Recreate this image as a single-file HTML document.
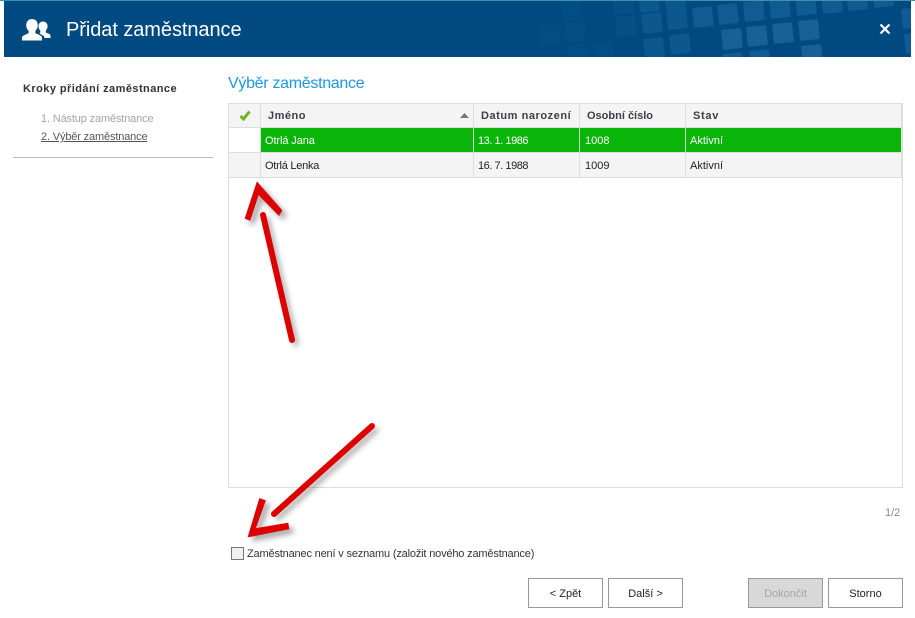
<!DOCTYPE html>
<html><head><meta charset="utf-8">
<style>
html,body{margin:0;padding:0;background:#fff}
#p{position:relative;width:915px;height:618px;overflow:hidden;background:#fff;font-family:"Liberation Sans",sans-serif;font-size:11px;color:#222}
#p span{position:absolute;white-space:nowrap;line-height:14px}
.b{position:absolute;box-sizing:border-box;top:578px;width:75px;height:30px;border:1px solid #999;background:#fff;text-align:center;line-height:30px;color:#222;font-size:11px}
.l{position:absolute}
.h{font-weight:bold;color:#3a3f48;font-size:11px}
</style></head><body><div id="p">
<div class="l" style="left:0;top:0;width:915px;height:1px;background:#3a93a8"></div>
<div class="l" style="left:4px;top:1px;width:907px;height:56px;background:#004a82;overflow:hidden">
<svg width="907" height="56" style="position:absolute;left:0;top:0" viewBox="4 1 907 56">
<defs><rect id="t" x="-10" y="-10" width="20" height="20" rx="2"/></defs>
<g fill="#2a75a8">
<g opacity=".08">
<use href="#t" transform="translate(572 10) rotate(-6)"/><use href="#t" transform="translate(575 32) rotate(-6)"/><use href="#t" transform="translate(550 35) rotate(-6)"/><use href="#t" transform="translate(577 55) rotate(-6)"/><use href="#t" transform="translate(603 53) rotate(-6)"/>
</g>
<g opacity=".14">
<use href="#t" transform="translate(623 4) rotate(-6)"/><use href="#t" transform="translate(626 26) rotate(-6)"/>
</g>
<g opacity=".3">
<use href="#t" transform="translate(649 2) rotate(-6)"/><use href="#t" transform="translate(675 0) rotate(-6)"/><use href="#t" transform="translate(652 23) rotate(-6)"/><use href="#t" transform="translate(677 19) rotate(-6)"/><use href="#t" transform="translate(654 48) rotate(-6)"/><use href="#t" transform="translate(680 44) rotate(-6)"/>
</g>
<g opacity=".4">
<use href="#t" transform="translate(703 17) rotate(-6)"/><use href="#t" transform="translate(728 14) rotate(-6)"/><use href="#t" transform="translate(754 11) rotate(-6)"/><use href="#t" transform="translate(780 8) rotate(-6)"/><use href="#t" transform="translate(806 5) rotate(-6)"/><use href="#t" transform="translate(832 3) rotate(-6)"/><use href="#t" transform="translate(857 0) rotate(-6)"/><use href="#t" transform="translate(883 -3) rotate(-6)"/><use href="#t" transform="translate(912 18) rotate(-6)"/><use href="#t" transform="translate(915 43) rotate(-6)"/>
<use href="#t" transform="translate(733 63) rotate(-6)"/><use href="#t" transform="translate(760 60) rotate(-6)"/>
</g>
<g opacity=".55">
<use href="#t" transform="translate(732 39) rotate(-6)"/><use href="#t" transform="translate(757 36) rotate(-6)"/><use href="#t" transform="translate(783 33) rotate(-6)"/><use href="#t" transform="translate(809 30) rotate(-6)"/><use href="#t" transform="translate(812 55) rotate(-6)"/>
</g>
</g>
</svg>
</div>
<svg class="l" style="left:0;top:0" width="60" height="50" viewBox="0 0 60 50"><path fill="#fff" d="M43 21.500c-2.700 0-4.500 2.100-4.500 4.800 0 1.800.7 3.300 1.800 4.300v2l-1 .6 5 3.300V38H50.500v-2.500c0-1.500-3.500-2.500-4.700-3v-2c1.100-1 1.800-2.500 1.800-4.200 0-2.700-1.900-4.800-4.600-4.800z"/><path fill="#fff" d="M32 19c-3.500 0-5.800 2.700-5.800 6.200 0 2.300 1 4.300 2.400 5.600v2.400c-2.500 1.100-6.600 2.300-6.600 4.300v3h20v-3c0-2-4.100-3.200-6.600-4.300v-2.400c1.400-1.300 2.400-3.300 2.400-5.600C37.800 21.700 35.500 19 32 19z"/></svg>
<span style="left:66px;top:19px;font-size:20px;line-height:22px;color:#fff;letter-spacing:-.07px">Přidat zaměstnance</span>
<svg class="l" style="left:879px;top:23px" width="12" height="12" viewBox="0 0 12 12"><path d="M1.500 1.500l9 9M10.500 1.500l-9 9" stroke="#fff" stroke-width="2.200"/></svg>

<span style="left:23px;top:82px;font-weight:bold;color:#333;letter-spacing:.44px">Kroky přidání zaměstnance</span>
<span style="left:41px;top:112px;color:#a4a4a8;letter-spacing:-.15px">1. Nástup zaměstnance</span>
<span style="left:41px;top:130px;color:#555;text-decoration:underline;letter-spacing:-.15px">2. Výběr zaměstnance</span>
<div class="l" style="left:13px;top:157px;width:200px;height:1px;background:#bbb"></div>

<span style="left:228px;top:75px;font-size:16px;line-height:18px;color:#1f96e4;letter-spacing:-.3px">Výběr zaměstnance</span>

<div class="l" style="left:228px;top:103px;width:675px;height:385px;box-sizing:border-box;border:1px solid #ddd;background:#fff"></div>
<div class="l" style="left:229px;top:104px;width:672px;height:73px;background:#f4f4f4"></div>
<div class="l" style="left:229px;top:128px;width:31px;height:24px;background:#fff"></div>
<div class="l" style="left:261px;top:128px;width:640px;height:24px;background:#08b508"></div>
<div class="l" style="left:229px;top:127px;width:673px;height:1px;background:#ddd"></div>
<div class="l" style="left:229px;top:152px;width:673px;height:1px;background:#ddd"></div>
<div class="l" style="left:229px;top:177px;width:673px;height:1px;background:#ddd"></div>
<div class="l" style="left:260px;top:104px;width:1px;height:73px;background:#ddd"></div>
<div class="l" style="left:473px;top:104px;width:1px;height:73px;background:#ddd"></div>
<div class="l" style="left:579px;top:104px;width:1px;height:73px;background:#ddd"></div>
<div class="l" style="left:685px;top:104px;width:1px;height:73px;background:#ddd"></div>
<div class="l" style="left:901px;top:104px;width:1px;height:73px;background:#ddd"></div>
<svg class="l" style="left:239px;top:110px" width="12" height="11" viewBox="0 0 12 11"><path d="M1.500 6l3 3 6-7.500" fill="none" stroke="#6cb61c" stroke-width="3"/></svg>
<span class="h" style="left:268px;top:109px;letter-spacing:.5px">Jméno</span>
<svg class="l" style="left:460px;top:113px" width="9" height="5"><path d="M0 5L4.500 0 9 5z" fill="#777"/></svg>
<span class="h" style="left:481px;top:109px;letter-spacing:.55px">Datum narození</span>
<span class="h" style="left:587px;top:109px">Osobní číslo</span>
<span class="h" style="left:693px;top:109px;letter-spacing:.7px">Stav</span>

<span style="left:265px;top:134px;color:#fff;letter-spacing:-.1px">Otrlá Jana</span>
<span style="left:478px;top:134px;color:#fff;letter-spacing:-.45px">13. 1. 1986</span>
<span style="left:585px;top:134px;color:#fff">1008</span>
<span style="left:690px;top:134px;color:#fff">Aktivní</span>
<span style="left:265px;top:159px;letter-spacing:-.25px">Otrlá Lenka</span>
<span style="left:478px;top:159px;letter-spacing:-.45px">16. 7. 1988</span>
<span style="left:585px;top:159px">1009</span>
<span style="left:690px;top:159px">Aktivní</span>

<span style="left:885px;top:506px;color:#888">1/2</span>
<div class="l" style="left:231px;top:547px;width:13px;height:13px;box-sizing:border-box;border:1px solid #777;background:#f0f0f0"></div>
<span style="left:247px;top:547px;letter-spacing:-.17px;color:#333">Zaměstnanec není v seznamu (založit nového zaměstnance)</span>

<div class="b" style="left:528px">&lt; Zpět</div>
<div class="b" style="left:608px">Další &gt;</div>
<div class="b" style="left:748px;background:#d8d8d8;color:#a6a6a6">Dokončit</div>
<div class="b" style="left:828px">Storno</div>

<svg class="l" style="left:0;top:0" width="915" height="618" viewBox="0 0 915 618">
<defs><filter id="s" x="-40%" y="-40%" width="180%" height="180%"><feGaussianBlur stdDeviation="3"/></filter></defs>
<g transform="translate(4,4)" filter="url(#s)" opacity=".34" fill="#000" stroke="#000" stroke-linecap="round">
<path d="M263 215L292 340M372 426L274 514" stroke-width="5" fill="none"/>
<path d="M257 182L282 210.500 279 215.500 258.500 194.500 250 220.500 245 218.500z"/>
<path d="M248 537L259.500 498.500 265.500 500.500 255.500 528.500 288 523 289 529z"/>
</g>
<g fill="none" stroke="#dd0000" stroke-linecap="round">
<path d="M263 215L292 340M372 426L274 514" stroke-width="6"/>
</g>
<g fill="#dd0000" stroke="#dd0000" stroke-width=".6" stroke-linejoin="round">
<path d="M257 182L282 210.500 279 215.500 258.500 194.500 250 220.500 245 218.500z"/>
<path d="M248 537L259.500 498.500 265.500 500.500 255.500 528.500 288 523 289 529z"/>
</g>
</svg>
</div></body></html>
